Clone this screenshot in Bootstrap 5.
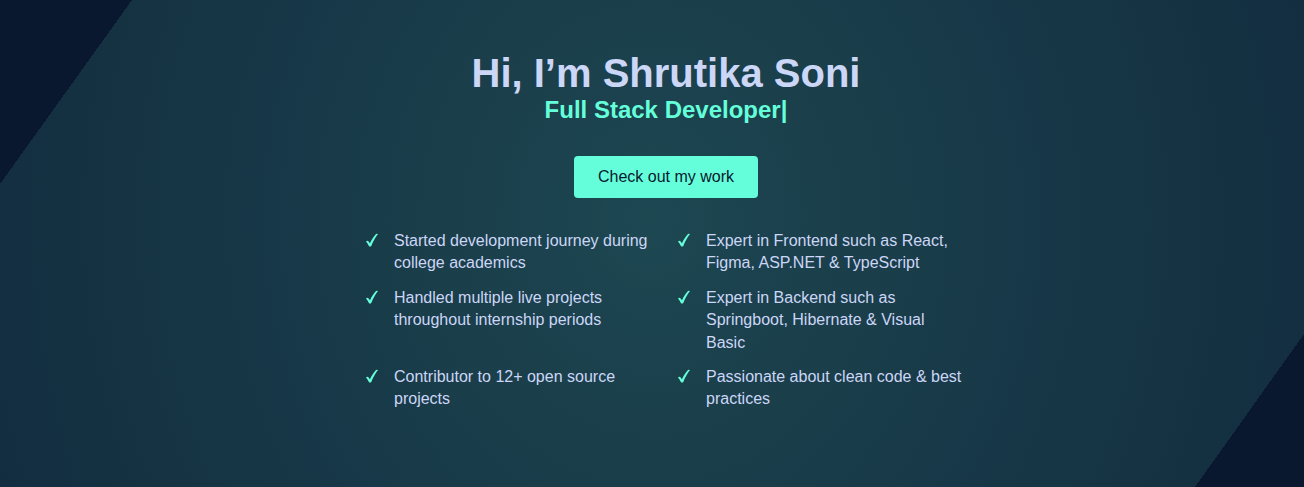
<!DOCTYPE html>
<html lang="en">
<head>
<meta charset="utf-8">
<meta name="viewport" content="width=device-width, initial-scale=1">
<title>Shrutika Soni</title>
<link href="https://cdn.jsdelivr.net/npm/bootstrap@5.3.0/dist/css/bootstrap.min.css" rel="stylesheet">
<style>
  :root { --navy: #09182f; --mint: #64ffda; --pale: #ccd6f6; }
  body { background: var(--navy); color: var(--pale); font-family: "Liberation Sans", Arial, sans-serif; }
  .hero {
    padding: 50px 0 0 28px;
    background:
      linear-gradient(to bottom right, var(--navy) 50%, transparent 50%) left top / 132px 184px no-repeat,
      linear-gradient(to top left, var(--navy) 50%, transparent 50%) right bottom / 109px 153px no-repeat,
      radial-gradient(ellipse 700px 800px at 50% 45%, #1d4852 0, #1b424e 16%, #1a3e4a 32%, #173848 54%, #153343 76%, #122d40 100%);
  }
  .hero-title { font-size: 40px; line-height: 46px; }
  .hero-role { font-size: 24px; line-height: 28px; color: var(--mint); }
  .btn-work { --bs-btn-bg: var(--mint); --bs-btn-color: var(--navy); --bs-btn-hover-bg: #8affe3; --bs-btn-hover-color: var(--navy); --bs-btn-border-width: 0; --bs-btn-border-radius: 4px; line-height: 26px; margin: 32px 0; }
  .feature-list { display: grid; grid-template-columns: 1fr 1fr; gap: 12px 24px; width: 100%; max-width: 600px; line-height: 1.4; }
  .tick { width: 12px; height: 14px; margin-top: 3px; fill: var(--mint); }
</style>
</head>
<body>
<svg class="d-none" aria-hidden="true"><symbol id="tick" viewBox="0 0 12 14"><path d="M0 8.400Q1.500 7.200 2.600 8.400L4 10.200C5.600 6.500 7.700 3.300 10 .9Q11.200.4 12 1.100C9.500 4.400 7.100 8.400 5.300 13Q4.200 13.900 3 13.300C2.300 11.600 1.200 9.800 0 8.400Z"/></symbol></svg>
<main class="hero min-vh-100 d-flex flex-column align-items-center">
  <h1 class="hero-title fw-bold text-center mb-0">Hi, I’m Shrutika Soni</h1>
  <h2 class="hero-role fw-bold text-center mb-0">Full Stack Developer|</h2>
  <button type="button" class="btn btn-work px-4 py-2">Check out my work</button>
  <ul class="feature-list list-unstyled mb-4">
    <li class="d-flex gap-3"><svg class="tick flex-shrink-0" aria-hidden="true"><use href="#tick"/></svg><span>Started development journey during college academics</span></li>
    <li class="d-flex gap-3"><svg class="tick flex-shrink-0" aria-hidden="true"><use href="#tick"/></svg><span>Expert in Frontend such as React, Figma, ASP.NET &amp; TypeScript</span></li>
    <li class="d-flex gap-3"><svg class="tick flex-shrink-0" aria-hidden="true"><use href="#tick"/></svg><span>Handled multiple live projects throughout internship periods</span></li>
    <li class="d-flex gap-3"><svg class="tick flex-shrink-0" aria-hidden="true"><use href="#tick"/></svg><span>Expert in Backend such as Springboot, Hibernate &amp; Visual Basic</span></li>
    <li class="d-flex gap-3"><svg class="tick flex-shrink-0" aria-hidden="true"><use href="#tick"/></svg><span>Contributor to 12+ open source projects</span></li>
    <li class="d-flex gap-3"><svg class="tick flex-shrink-0" aria-hidden="true"><use href="#tick"/></svg><span>Passionate about clean code &amp; best practices</span></li>
  </ul>
</main>
<script src="https://cdn.jsdelivr.net/npm/bootstrap@5.3.0/dist/js/bootstrap.bundle.min.js"></script>
</body>
</html>
